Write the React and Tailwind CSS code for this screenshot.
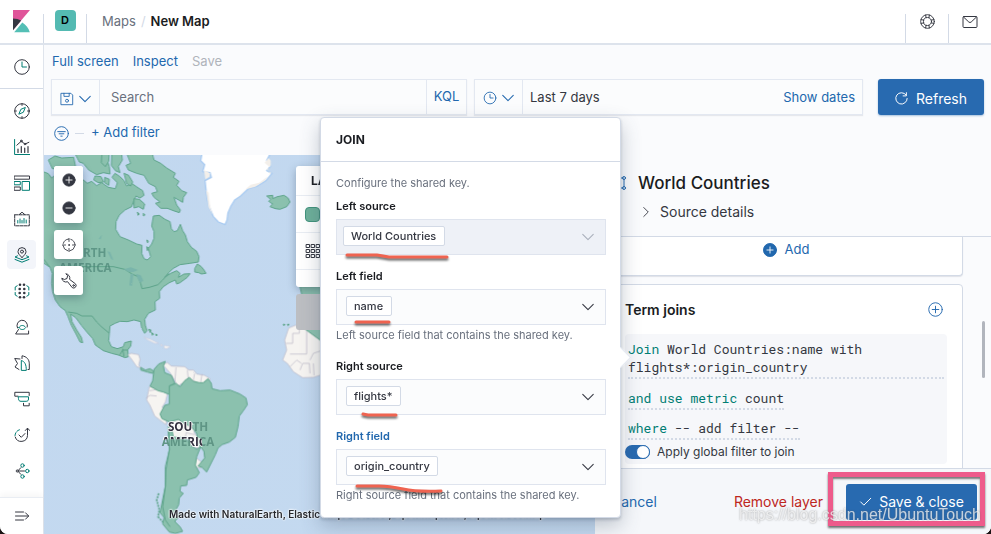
import React from 'react';

function Icon({ size = 16, className = '', children }) {
  return (
    <svg
      width={size}
      height={size}
      viewBox="0 0 16 16"
      fill="none"
      stroke="currentColor"
      strokeLinecap="round"
      strokeLinejoin="round"
      className={`shrink-0 ${className}`}
      aria-hidden="true"
    >
      {children}
    </svg>
  );
}

const TEAL = '#017d73';

const ChevronDown = ({ className }) => (
  <Icon size={14} className={className}>
    <path d="M2 5l6 6 6-6" strokeWidth="1.2" />
  </Icon>
);

function KibanaLogo() {
  return (
    <svg width="18" height="23" viewBox="0 0 18 23" aria-hidden="true">
      <path d="M0 0h17L0 20z" fill="#e0559a" />
      <path d="M0 8.5c3 0 5.800.8 8.200 2.100L0 20.300z" fill="#343741" />
      <path d="M9.300 12.500c3.700 2.500 6.500 5.800 7.500 9.700H1.200z" fill="#54bfb5" />
    </svg>
  );
}

const navItems = [
  {
    label: 'Discover',
    art: (
      <>
        <circle cx="8" cy="8" r="7.300" />
        <path d="M8 .8v1.600M8 13.600v1.600M.8 8h1.600M13.600 8h1.600" />
        <path d="M11.200 4.800L9.300 9.300l-4.500 1.900 1.900-4.500z" stroke={TEAL} />
      </>
    ),
  },
  {
    label: 'Visualize',
    art: (
      <>
        <path d="M.6.5v15h15" stroke={TEAL} />
        <path d="M4 13.500V10M7.300 13.500V7.500M10.700 13.500V9M14 13.500V7.500" strokeWidth="1.200" />
        <path d="M2.800 6.200L7.300 2.200l3.600 2.900 4-1.800" />
        <circle cx="7.300" cy="2" r=".9" />
        <circle cx="11" cy="5" r=".8" />
      </>
    ),
  },
  {
    label: 'Dashboard',
    art: (
      <>
        <rect x=".5" y="1" width="15" height="3.200" />
        <rect x=".5" y="6.500" width="5.800" height="3.300" stroke={TEAL} />
        <rect x=".5" y="12" width="5.800" height="3.300" />
        <rect x="8.500" y="6.500" width="7" height="8.800" stroke={TEAL} />
      </>
    ),
  },
  {
    label: 'Canvas',
    art: (
      <>
        <path d="M5.300 3.500L8 1.200l2.700 2.300" />
        <rect x=".7" y="3.800" width="14.600" height="11" strokeDasharray="3 1" />
        <path d="M3.800 12V9.500M6 12V8M8 12V9.500M10 12V7.500M12.200 12V9" stroke={TEAL} />
      </>
    ),
  },
  {
    label: 'Maps',
    active: true,
    art: (
      <>
        <path d="M8 10.500C5.500 8 4 6.500 4 4.600a4 4 0 0 1 8 0C12 6.500 10.500 8 8 10.500z" />
        <circle cx="8" cy="4.600" r="1.500" />
        <path d="M3.500 8.800L1 10l7 2.700L15 10l-2.500-1.200M1 12.400l7 2.800 7-2.800" stroke={TEAL} />
      </>
    ),
  },
  {
    label: 'Machine Learning',
    art: (
      <>
        <path d="M3.200 2.800L1.200 4v3M1.200 9.500V12l2 1.200M12.800 2.800l2 1.200v3M14.800 9.500V12l-2 1.200" stroke={TEAL} />
        <g fill="currentColor" stroke="none">
          <circle cx="6" cy="1.800" r="1.300" />
          <circle cx="10" cy="1.800" r="1.300" />
          <circle cx="5.700" cy="6" r="1.300" />
          <circle cx="10.300" cy="6" r="1.300" />
          <circle cx="5.700" cy="10" r="1.300" />
          <circle cx="10.300" cy="10" r="1.300" />
          <circle cx="6" cy="14.200" r="1.300" />
          <circle cx="10" cy="14.200" r="1.300" />
        </g>
      </>
    ),
  },
  {
    label: 'Metrics',
    art: (
      <>
        <path d="M3.500 9A5.300 5.300 0 1 1 13.300 8" />
        <path d="M4.500 10.500L1.600 15h13V12" />
        <path d="M5 8.500c1-1.500 2-2 3.300-2s2.300.5 3.400 2c-1 1.600-2 2-3.400 2s-2.400-.5-3.300-2z" stroke={TEAL} />
      </>
    ),
  },
  {
    label: 'Logs',
    art: (
      <>
        <path d="M8 3.500V.8c4.500.7 7.300 3.500 7.300 8v5.700H14" />
        <path d="M6 4L.7 3.500l2.800 5L1 12l4 2.500" />
        <path d="M7.300 15V5.500c3.500 1 5 4 5 9.500z" stroke={TEAL} />
      </>
    ),
  },
  {
    label: 'APM',
    art: (
      <>
        <path d="M4 5.200H.8V1.300h14.400v3.200" />
        <path d="M4.500 5.800h10V8c0 1.500-.8 2.300-2.300 2.300H7C5.400 10.300 4.500 9.500 4.500 8z" stroke={TEAL} />
        <path d="M9.500 12.300v2.500h5.700v-2.500" />
      </>
    ),
  },
  {
    label: 'Uptime',
    art: (
      <>
        <path d="M1 8.500a6.500 6.500 0 0 1 5.500-6" stroke={TEAL} strokeDasharray="3 1.500" />
        <path d="M1.200 10a6.300 6.300 0 0 0 12.300-1.500V1.500M11.300 3.500l2.200-2.400 2.200 2.400" />
        <path d="M5 8l2.300 2.300L11 6.500" />
      </>
    ),
  },
  {
    label: 'SIEM',
    art: (
      <>
        <circle cx="8.500" cy="2.500" r="1.700" stroke={TEAL} />
        <circle cx="13.300" cy="8" r="1.700" stroke={TEAL} />
        <circle cx="8.500" cy="13.500" r="1.700" stroke={TEAL} />
        <circle cx="3.300" cy="8" r="1.100" />
        <path d="M4.500 8h6M4.500 7.200l2.300-2.500M4.500 8.800l2.300 2.500" />
      </>
    ),
  },
];

function Sidebar() {
  return (
    <nav className="flex w-11 shrink-0 flex-col border-r border-[#dfe4ec] bg-white text-[#343741]" aria-label="Primary">
      <div className="flex h-11 shrink-0 items-center justify-center border-b border-[#d3dae6]">
        <button aria-label="Recently viewed">
          <Icon>
            <circle cx="8" cy="8" r="7.300" />
            <path d="M8 3v5h4.500" stroke={TEAL} />
          </Icon>
        </button>
      </div>
      <ul className="flex flex-1 flex-col items-center gap-[7px] pt-[7px]">
        {navItems.map((item) => (
          <li key={item.label}>
            <button
              aria-label={item.label}
              className={`flex size-[29px] items-center justify-center rounded ${item.active ? 'bg-[#f3f5fa]' : ''}`}
            >
              <Icon>{item.art}</Icon>
            </button>
          </li>
        ))}
      </ul>
      <div className="flex h-[37px] shrink-0 items-center justify-center border-t border-[#e9edf3] shadow-[0_-3px_6px_rgba(0,0,0,0.04)]">
        <button aria-label="Expand navigation">
          <Icon>
            <path d="M1.500 4h8M1.500 8h13M1.500 12h8M11.500 4.800L14.700 8l-3.200 3.200" />
          </Icon>
        </button>
      </div>
    </nav>
  );
}

function Header() {
  return (
    <header className="relative z-10 flex h-[45px] shrink-0 items-end border-b-2 border-[#dde3ec] bg-white">
      <div className="flex h-[33px] w-[43px] items-start justify-center">
        <KibanaLogo />
      </div>
      <div className="flex h-[29px] w-11 items-start justify-center border-x border-[#d3dae6]">
        <span className="-mt-1 flex size-[21px] items-center justify-center rounded bg-[#54bab2] text-[11px] font-semibold text-black">
          D
        </span>
      </div>
      <div className="flex h-11 flex-1 items-center gap-[5px] pt-0.5 pl-[15px] text-[13px]">
        <a href="#maps" className="text-[#69707d]">Maps</a>
        <span className="text-[#d3dae6]">/</span>
        <span className="font-semibold text-[#1a1c21]">New Map</span>
      </div>
      <div className="flex h-[29px] w-[43px] justify-center border-l border-[#d3dae6] text-[#343741]">
        <button aria-label="Help" className="-mt-3.5">
          <Icon size={15}>
            <circle cx="8" cy="8" r="7.300" />
            <circle cx="8" cy="8" r="4.300" />
            <path d="M6 1.200l.5 2.800M10 1.200l-.5 2.800M6 14.800l.5-2.800M10 14.800l-.5-2.800M1.200 6l2.800.5M1.200 10l2.800-.5M14.800 6l-2.800.5M14.800 10l-2.800-.5" />
          </Icon>
        </button>
      </div>
      <div className="flex h-[29px] w-[43px] justify-center border-l border-[#d3dae6] text-[#343741]">
        <button aria-label="Newsfeed" className="-mt-3.5">
          <Icon>
            <rect x="1" y="2.500" width="14" height="11" rx="1" />
            <path d="M1.500 3l5.300 5a1.800 1.800 0 0 0 2.400 0l5.300-5" />
          </Icon>
        </button>
      </div>
    </header>
  );
}

function QueryBar() {
  return (
    <div className="px-[7px] text-[13px] text-[#2268ae]">
      <div className="flex h-[34px] items-center gap-[14px] px-px">
        <button>Full screen</button>
        <button>Inspect</button>
        <button disabled className="text-[#b0b4bb]">Save</button>
      </div>
      <div className="flex h-9">
        <div className="flex flex-1 border border-[#e3e8f1] bg-[#fbfcfd] shadow-[0_1px_1px_rgba(120,130,150,0.15)]">
          <button aria-label="Saved queries" className="flex w-12 items-center justify-center gap-1 border-r border-[#e3e8f1] pt-1">
            <Icon size={14}>
              <path d="M1.500 1.500h11l2 2v11h-13z" />
              <path d="M4.500 1.500v3.500h6V1.500" />
              <circle cx="8" cy="10" r="1.700" />
            </Icon>
            <ChevronDown />
          </button>
          <input
            aria-label="Search"
            placeholder="Search"
            className="min-w-0 flex-1 bg-transparent px-[11px] pt-0.5 outline-none placeholder:text-[#69707d]"
          />
          <button className="w-10 border-l border-[#e3e8f1]">KQL</button>
        </div>
        <div className="ml-[7px] flex w-[389px] border border-[#e3e8f1] bg-[#fbfcfd] shadow-[0_1px_1px_rgba(120,130,150,0.15)]">
          <button aria-label="Quick select" className="flex w-12 items-center justify-center gap-1 border-r border-[#e3e8f1] pt-0.5">
            <Icon size={14}>
              <circle cx="8" cy="8" r="6.700" />
              <path d="M8 4v4h3.500" />
            </Icon>
            <ChevronDown />
          </button>
          <button className="flex flex-1 items-center justify-between px-[7px] pt-0.5">
            <span className="text-[#343741]">Last 7 days</span>
            <span>Show dates</span>
          </button>
        </div>
        <button className="ml-[15px] flex w-[106px] items-center justify-center gap-2 rounded-[3px] bg-[#286ab0] pt-0.5 text-[14px] text-white shadow-[0_1px_2px_rgba(40,106,176,0.4)]">
          <Icon size={13}>
            <path d="M13.500 3.500A7 7 0 1 0 15 8M14 .8v4h-4" strokeWidth="1.200" />
          </Icon>
          Refresh
        </button>
      </div>
      <div className="flex h-9 items-center gap-[6px] pl-[3px]">
        <button aria-label="Filter options">
          <Icon size={15}>
            <circle cx="8" cy="8" r="7.300" />
            <path d="M4 6h8M5.500 8.300h5M7.300 10.800h1.400" />
          </Icon>
        </button>
        <span className="h-px w-[9px] bg-[#d3dae6]" />
        <button className="pl-px">+ Add filter</button>
      </div>
    </div>
  );
}

function WorldMap() {
  return (
    <svg
      className="absolute inset-0 h-full w-full"
      viewBox="132 45 1653 1137"
      preserveAspectRatio="xMinYMin slice"
      aria-label="Map"
    >
      <defs>
        <filter id="coast" x="-5%" y="-5%" width="110%" height="110%">
          <feTurbulence type="fractalNoise" baseFrequency="0.14" numOctaves="2" seed="4" />
          <feDisplacementMap in="SourceGraphic" scale="4" xChannelSelector="R" yChannelSelector="G" />
        </filter>
        <radialGradient id="sea" cx="35%" cy="60%" r="80%">
          <stop offset="0" stopColor="#c5daf0" />
          <stop offset="1" stopColor="#c1d7ef" />
        </radialGradient>
        <clipPath id="bolivia">
          <path d="M470 830h32l10-18 26 0 26 20 18 24 0 30 24 12 2 30-16 14-18-6-4-38-40 0-30 0-20 4-6 34-36 0z" />
        </clipPath>
      </defs>
      <rect x="100" y="0" width="4000" height="3000" fill="url(#sea)" />

      <g filter="url(#coast)" strokeLinejoin="round">
        <path
          d="M607 35L602 62 614 74 608 95 630 98 634 112 615 122 618 150 622 180 628 200 640 230 655 246 675 254 681 240 684 218 692 200 704 180 722 168 745 146 772 138 798 122 816 100 800 92 812 78 800 62 814 35z"
          fill="#ffffff"
          stroke="#a9cbf1"
          strokeWidth="4"
        />
        <path
          d="M612 90l18 10-2 10-12 8zM618 150l8 8 4 40 8 26-12-22zM716 168l16-16 20-18 26-6 22-16 14-14-12-6 6-12-14-12 12-14 6 8 0 16-12 10 10 12-16 22-28 18-28 8-20 20z"
          fill="#f3efea"
        />

        <g fill="#8bc1ae" stroke="#5ea48b" strokeWidth="3">
          <path d="M120 90L132 96 145 101 155 114 165 106 200 110 250 120 262 130 275 124 290 137 305 128 325 142 346 146 352 128 336 112 345 100 360 110 372 122 380 138 395 130 412 142 428 152 432 166 420 174 408 168 400 186 395 200 375 210 358 225 348 245 347 268 360 290 385 300 410 312 426 316 425 340 432 356 442 360 452 350 448 336 445 325 455 312 462 295 462 275 455 258 458 240 460 228 478 226 495 238 510 245 514 266 522 275 532 272 541 253 548 272 556 285 562 305 574 322 590 334 597 350 595 366 570 370 540 374 520 385 506 398 494 412 512 400 530 392 540 400 535 412 552 402 570 401 562 412 540 428 530 432 526 420 508 428 490 440 478 455 479 475 465 485 466 510 445 520 434 538 436 556 441 572 434 580 425 564 422 545 402 540 382 545 360 544 345 550 330 558 328 580 326 602 334 620 352 626 370 620 374 608 394 603 392 618 383 630 385 650 375 653 355 645 335 640 310 632 286 615 278 596 262 578 244 556 228 534 212 522 216 545 230 570 244 592 248 608 240 606 228 582 214 556 204 530 196 512 180 500 166 480 158 455 155 430 157 400 150 382 120 362z" />
          <path d="M378 35H455L462 60 482 70 500 84 526 100 520 112 537 124 530 136 545 152 560 158 550 172 548 187 536 180 522 172 530 195 541 210 538 218 520 212 502 205 482 205 466 190 480 186 462 172 455 160 472 155 466 140 446 130 432 106 410 100 400 96 385 90 378 76 392 70z" />
          <path d="M336 35h28l3 25-12 20 5 18-14-6-12-16zM372 100l14 6 12 20-6 12-12-8zM402 176l16 2 16 14-4 16-14-8-14 4z" />
          <path d="M222 35h70l26 15 10 30 2 22-20-4-20 6-24-14-16-20-12-4zM145 60l20-12 20 6 36-2 6 30-20 8-50-4z" />
          <path d="M306 35h22l-2 29-10 16-12-12zM285 108l18 2 8 16-16 2-14-8zM314 112l14 6-2 18-12-8z" />
          <path d="M800 168l18-2 0 10 14-6 20-4 12 8 6 12-10 14-20 8-14-2-16-6 8-8-12-8 6-6z" />
          <path d="M584 386l8-14 12 8 8 10 6 10-14 2-8-4-12-2z" />
          <path d="M412 216l6 6-4 4zM430 220l5 5-5 3zM440 300l5 3-2 6zM440 320l5 4-3 8zM446 568l7 2-2 8zM455 578l6 4-4 4zM468 582l4 3-3 3zM850 552l5 2-4 3zM862 553l6 0-4 4z" />
        </g>

        <g fill="none" stroke="#5ea48b" strokeWidth="3">
          <path d="M240 380h100l34 8 22 14 18 8 8 20 4 16 22-4 26-8 14-14 18-20" />
          <path d="M204 516l26 4 16 8 30 0 14 18 14 14 24 20" />
          <path d="M150 382l-20-26M368 626l4 24M360 644l8-14h14" />
        </g>
        <g fill="#7ab5ab">
          <path d="M372 388l20-6 22 8-14 6-14 0zM392 402l8 0-4 36-8-2zM408 402l14 4 8 16-10 6-8-14zM296 296l10-12-4 14zM322 334l8 2 10 24-6-2z" />
        </g>

        <g transform="translate(0 570)">
          <g fill="#f6f4f1" stroke="#b9b6c6" strokeWidth="2">
            <path d="M384 74l10-4 22 4 4 14-4 18 8 8-14-4-8-12-10-14z" />
            <path d="M432 22l20 6 24 12-12 0-20-10zM492 46l20 4-12 6-8-2zM482 42l6 4-6 2z" stroke="#c7cbe0" />
            <path d="M488 104l14-6 12 10 40 2 12 10 14 0 10 12 24 4 16 10-8 16-14 4-30-4-12-10-24 10-10 8-8-20-14-22z" />
            <path d="M448 170l24 6 30 16-6 24-10 16 16 14-4 38-34-26-14-32-10-16z" />
            <path d="M504 248l26-8 8 12 26 10 20 24-2 22 24 30-10 16-20-4-14-30-44 8-8-18z" />
            <path d="M586 382l26 20-2 8-14 4-12-6z" />
            <path d="M866 -6L886 -14 1040-14 1040 130 962 135 940 142 908 143 880 125 862 100 848 90 860 60 854 30z" />
          </g>
          <g fill="none" stroke="#b9b6c6" strokeWidth="2">
            <path d="M448 182l24-4M438 204l12-8 20 2M528 112l-4 50M562 120l4 40M584 130l-4 20 12 10M606 132l-4 24M512 244l2 40M556 326l2-18 26 6M920-10v82h-50M858 40h20v-30h20v-24M930 90l10-20 24-8M870 110l20-20 14 10M900 120l8-20 20 0 2 30M940 100l2 36" />
          </g>
          <g fill="#8bc1ae" stroke="#5ea48b" strokeWidth="3">
            <path d="M422 112l14 8 14-4 12 8-4 6-16-4-20-6z" />
            <path d="M462 118l14-16 20-8-6 14 4 20 20 8 10 24-16 8 2 26-20-8-16-4-24-14 8-16z" />
            <path d="M508 168l20-8 12 10 14-18 14-10 12 12 18 4 12 0 14-12 10 14 2 16 24 6 30-2 30 12 18 12 4 20-12 18-12 16-4 32-8 32-18 14-22 8-12 10-8 20-26 52-14-14-12-4 20-24-2-20-18-24-4-30-16-20-28-12-10-10-28 8-22-10-6-14 14-26 14-4z" />
            <path d="M504 290l12 10 4 22 34 0 22 26 14 10 12-8-12 30-4 26 12 22-10 14-26 8-2 16-18 2-2 16 10 6-12 14-2 20-10 18 14 14-4 6-12 12 16 16 8 14-22 6-18-4-20-24 4-20-12-14 8-40 8-40 2-50 10-60z" />
            <path d="M900-14l60 44h80v-60H900z" />
          </g>
          <path d="M506 300l2 60-12 50 0 60-8 60 8 40 14 20" fill="none" stroke="#5ea48b" strokeWidth="3" />
          <path d="M476 490l-6 20 8 30-4 20 14 16" fill="none" stroke="#5ea48b" strokeWidth="5" strokeDasharray="6 3" />
        </g>
        <path d="M900 440h140v60H900l8-24z" fill="#8bc1ae" stroke="#5ea48b" strokeWidth="3" />
      </g>

      <g fontFamily='"Open Sans", "Noto Sans", sans-serif' fontWeight="700" fontSize="35" textAnchor="middle">
        <g fill="#4c8577" opacity="0.7">
          <text x="256" y="352">NORTH</text>
          <text x="256" y="397">AMERICA</text>
        </g>
        <g fill="#5f9585">
          <text x="564" y="874">SOUTH</text>
          <text x="564" y="919">AMERICA</text>
        </g>
        <g fill="#33303f" stroke="#ffffff" strokeWidth="5" paintOrder="stroke" clipPath="url(#bolivia)" aria-hidden="true">
          <text x="564" y="874">SOUTH</text>
          <text x="564" y="919">AMERICA</text>
        </g>
      </g>
    </svg>
  );
}

const mapButton = 'flex w-[29px] items-center justify-center rounded-[3px] bg-white text-[#343741]';

function MapControls() {
  return (
    <div className="absolute top-[11px] left-[10px] flex flex-col gap-[7px]">
      <div className="flex flex-col rounded-[3px] bg-white pb-px shadow-[0_3px_8px_rgba(40,60,80,0.35)]">
        <button aria-label="Zoom in" className={`${mapButton} h-7`}>
          <Icon size={14}>
            <circle cx="8" cy="8" r="7" fill="#343741" />
            <path d="M8 4.500v7M4.500 8h7" stroke="#fff" />
          </Icon>
        </button>
        <button aria-label="Zoom out" className={`${mapButton} h-7`}>
          <Icon size={14}>
            <circle cx="8" cy="8" r="7" fill="#343741" />
            <path d="M4.500 8h7" stroke="#fff" />
          </Icon>
        </button>
      </div>
      <button aria-label="Fit to data" className={`${mapButton} h-[29px] shadow-[0_3px_8px_rgba(40,60,80,0.35)]`}>
        <Icon size={14}>
          <circle cx="8" cy="8" r="6.800" strokeDasharray="8 2.680" strokeDashoffset="-1.340" />
          <path d="M8 .5v3.500M8 12v3.500M.5 8H4M12 8h3.500" />
          <circle cx="8" cy="8" r=".5" fill="#343741" />
        </Icon>
      </button>
      <button aria-label="Tools" className={`${mapButton} h-[29px] shadow-[0_3px_8px_rgba(40,60,80,0.35)]`}>
        <Icon>
          <path d="M5.200.8a4.200 4.200 0 0 1 3.400 5.600l5.900 4.500a2.500 2.500 0 0 1-3.300 3.700L6.600 8.700A4.200 4.200 0 0 1 .8 5.200L3.300 6.500 6 5.500 6.500 3z" />
          <circle cx="12.600" cy="12.500" r=".8" />
        </Icon>
      </button>
    </div>
  );
}

function LayerList() {
  return (
    <div className="absolute top-[11px] left-[252px] flex w-[220px] flex-col gap-[7px]">
      <section className="rounded-[3px] bg-white shadow-[0_3px_8px_rgba(40,60,80,0.35)]">
        <h2 className="flex h-[29px] items-center px-[15px] text-[12px] font-bold text-[#1a1c21]">LAYERS</h2>
        <div className="flex h-[37px] items-center border-t border-[#e9edf3] px-[9px]">
          <span className="size-[15px] rounded-[4px] border border-[#41937c] bg-[#6db09a]" />
        </div>
        <div className="flex h-[37px] items-center border-t border-[#e9edf3] px-[9px] text-[#343741]">
          <Icon>
            {[1.5, 6.5, 11.5].map((y) =>
              [1.5, 6.5, 11.5].map((x) => <rect key={`${x}-${y}`} x={x} y={y} width="3" height="3" />),
            )}
          </Icon>
        </div>
        <div className="h-[18px] border-t border-[#e9edf3]" />
      </section>
      <button aria-label="Add layer" disabled className="h-9 rounded-[3px] bg-[#bcbec2]" />
    </div>
  );
}

function MapView() {
  return (
    <div className="relative min-w-0 flex-1 overflow-hidden">
      <WorldMap />
      <MapControls />
      <LayerList />
      <p className="absolute bottom-[13px] left-[125px] text-[10px] leading-[14px] font-semibold whitespace-nowrap text-[#26282e] [text-shadow:0_0_2px_#fff,0_0_2px_#fff,0_0_2px_#fff]">
        Made with NaturalEarth, Elastic Maps Service, OpenMapTiles, OpenStreetMap
      </p>
    </div>
  );
}

function LayerPanel() {
  return (
    <aside className="relative flex w-[396px] shrink-0 flex-col bg-[#fafbfd]">
      <div className="h-[82px] shrink-0 border-b border-[#d3dae6] pt-[15px] pl-4">
        <div className="flex items-center gap-[11px]">
          <Icon className="text-[#2268ae]">
            <path d="M3.500 3h9M3 4.500v7M13 4.500v7M3.500 13h9" />
            <circle cx="3" cy="3" r="1.500" />
            <circle cx="13" cy="3" r="1.500" />
            <circle cx="3" cy="13" r="1.500" />
            <circle cx="13" cy="13" r="1.500" />
          </Icon>
          <h1 className="text-[17px] leading-[26px] font-medium text-[#1a1c21]">World Countries</h1>
        </div>
        <button className="flex items-center gap-2 pt-[5px] pl-[29px] text-[14px] leading-[22px] text-[#343741]">
          <Icon size={12}>
            <path d="M5 2l6 6-6 6" strokeWidth="1.200" />
          </Icon>
          Source details
        </button>
      </div>
      <div className="flex min-h-0 flex-1 flex-col gap-2 overflow-hidden pr-7 pl-[14px]">
        <section className="flex h-[39px] shrink-0 justify-center rounded-b-[4px] border border-t-0 border-[#d3dae6] bg-white shadow-[0_1px_1px_rgba(120,130,150,0.2)]">
          <button className="flex h-[26px] items-center gap-2 text-[13px] text-[#2268ae]">
            <Icon size={14}>
              <circle cx="8" cy="8" r="7.500" fill="#2268ae" />
              <path d="M8 4.500v7M4.500 8h7" stroke="#fff" />
            </Icon>
            Add
          </button>
        </section>
        <section className="shrink-0 rounded-[4px] border border-[#d3dae6] bg-white px-[15px] pb-4">
          <div className="flex h-[49px] items-center justify-between pr-1">
            <h2 className="text-[14px] font-semibold text-[#1a1c21]">Term joins</h2>
            <button aria-label="Add join" className="text-[#2268ae]">
              <Icon size={15}>
                <circle cx="8" cy="8" r="7.200" />
                <path d="M8 4.500v7M4.500 8h7" />
              </Icon>
            </button>
          </div>
          <div className="flex flex-col items-start rounded-[4px] bg-[#f6f7fa] px-[3px] pt-[6px] font-['Roboto_Mono','DejaVu_Sans_Mono','Liberation_Mono',monospace] text-[13px] leading-[18px] text-[#343741]">
            <button className="w-full border-b-2 border-dotted border-[#d3dae6] pb-[1px] text-left">
              <span className="text-[#017d73]">Join</span> World Countries:name with
              <br />
              flights*:origin_country
            </button>
            <button className="mt-[10px] border-b-2 border-dotted border-[#d3dae6] pb-px">
              <span className="text-[#017d73]">and use metric</span> count
            </button>
            <button className="mt-[9px] border-b-2 border-dotted border-[#d3dae6] pb-px">
              <span className="text-[#017d73]">where</span> -- add filter --
            </button>
            <label className="flex h-6 items-center gap-[7px] font-['Inter',sans-serif] text-[12px]">
              <input
                type="checkbox"
                role="switch"
                defaultChecked
                className="relative -ml-[3px] h-[14px] w-[25px] appearance-none rounded-full bg-[#286ab0] before:absolute before:top-0 before:right-0 before:size-[14px] before:rounded-full before:border before:border-[#286ab0] before:bg-white"
              />
              Apply global filter to join
            </label>
          </div>
        </section>
      </div>
      <div className="absolute right-[6px] top-[166px] h-[57px] w-[3px] rounded-full bg-[#b1b5bd]" />
      <footer className="flex h-[66px] shrink-0 items-center border-t border-[#d3dae6] bg-[#f5f7fa] pr-[14px] pl-4 text-[14px]">
        <button className="text-[#2268ae]">Cancel</button>
        <button className="ml-auto text-[#bd271e]">Remove layer</button>
        <div className="relative ml-[23px]">
          <button className="flex h-9 w-[131px] items-center justify-center gap-[7px] rounded-[3px] bg-[#286ab0] text-white">
            <Icon size={13}>
              <path d="M2 8.500l4 4L14.500 4" strokeWidth="1.200" />
            </Icon>
            Save &amp; close
          </button>
          <div className="pointer-events-none absolute -top-3 -right-2 -bottom-[6px] -left-[18px] border-[5px] border-[#ee5b8b] shadow-[0_2px_2px_rgba(0,0,0,0.55),inset_0_2px_2px_rgba(0,0,0,0.5)]" />
        </div>
      </footer>
    </aside>
  );
}

function Field({ id, label, value, help, disabled, focused, inset = 'pl-[9px]', mark, className = '' }) {
  return (
    <div className={className}>
      <label htmlFor={id} className={`block h-[22px] text-[11px] leading-[18px] font-semibold ${focused ? 'text-[#2268ae]' : 'text-[#1a1c21]'}`}>
        {label}
      </label>
      <div
        className={`relative flex h-9 items-center justify-between border border-[#dfe4ee] pr-[10px] ${inset} ${disabled ? 'bg-[#eef1f7]' : 'bg-[#fbfcfd]'}`}
      >
        <select
          id={id}
          disabled={disabled}
          className="mb-0.5 h-5 appearance-none rounded-[2px] border border-[#d3dae6] bg-white px-[7px] text-[11px] leading-[18px] font-medium text-[#343741] opacity-100"
        >
          <option>{value}</option>
        </select>
        <ChevronDown className={disabled ? 'text-[#a9afbb]' : 'text-[#343741]'} />
        <svg
          className="pointer-events-none absolute top-[31px] left-0 overflow-visible drop-shadow-[0_2px_1px_rgba(0,0,0,0.6)]"
          width="120"
          height="14"
          fill="none"
          stroke="#ef6350"
          strokeWidth="3"
          strokeLinecap="round"
          strokeLinejoin="round"
          aria-hidden="true"
        >
          <path d={mark} />
        </svg>
      </div>
      {help && <p className="text-[11px] leading-5 text-[#69707d]">{help}</p>}
    </div>
  );
}

function JoinPopover() {
  return (
    <div
      role="dialog"
      aria-label="Join"
      className="absolute top-[117px] right-[370px] z-20 w-[301px] rounded-[4px] border border-[#d3dae6] bg-white shadow-[0_8px_20px_rgba(60,75,100,0.3),0_2px_3px_rgba(60,75,100,0.25)]"
    >
      <h2 className="flex h-11 items-center border-b border-[#d3dae6] px-[15px] text-[12px] font-bold text-[#1a1c21]">JOIN</h2>
      <div className="pt-[11px] pr-[14px] pb-3 pl-[15px]">
        <p className="pb-1 text-[11px] leading-5 text-[#69707d]">Configure the shared key.</p>
        <Field id="left-source" label="Left source" value="World Countries" disabled inset="pl-[6px]" mark="M10 4h30l12 2h58" />
        <Field
          id="left-field"
          label="Left field"
          value="name"
          help="Left source field that contains the shared key."
          mark="M19 1h33"
          className="pt-3"
        />
        <Field id="right-source" label="Right source" value="flights*" mark="M26 3l5 1h28" className="pt-3" />
        <Field
          id="right-field"
          label="Right field"
          value="origin_country"
          help="Right source field that contains the shared key."
          focused
          mark="M20 5h22q10 0 24 3t38 2"
          className="pt-3"
        />
      </div>
      <span className="absolute top-[232px] -right-2 size-[15px] rotate-45 border-t border-r border-[#e3e8f1] bg-white" />
    </div>
  );
}

export default function App() {
  return (
    <div className="bg-[#1b1414]">
      <div className="relative flex h-screen flex-col overflow-hidden rounded-b-[8px] bg-[#fafbfd] font-['Inter',sans-serif]">
        <Header />
        <div className="flex min-h-0 flex-1">
          <Sidebar />
          <main className="flex min-w-0 flex-1 flex-col">
            <QueryBar />
            <div className="mt-1 flex min-h-0 flex-1">
              <MapView />
              <LayerPanel />
            </div>
          </main>
        </div>
        <JoinPopover />
        <p className="pointer-events-none absolute right-[10px] bottom-[9px] z-30 font-['Liberation_Sans',sans-serif] text-[16px] leading-5 text-white/70 [text-shadow:0_0_2px_rgba(90,90,90,0.6)]">
          https://blog.csdn.net/UbuntuTouch
        </p>
      </div>
    </div>
  );
}
